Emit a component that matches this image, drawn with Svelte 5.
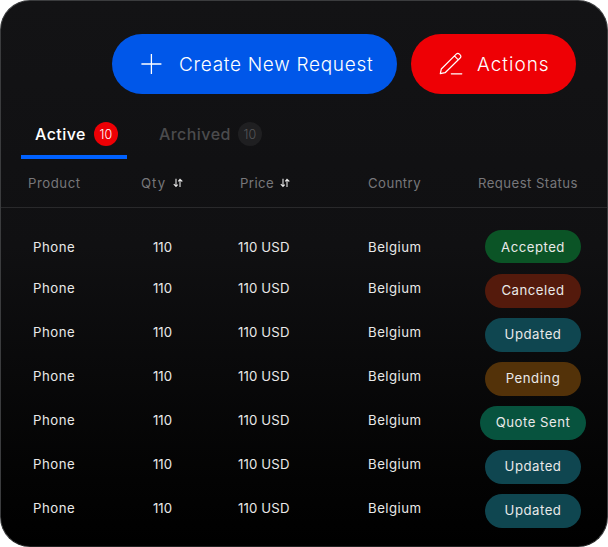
<script>
  const columns = [
    { label: 'Product', cls: 'h-product' },
    { label: 'Qty', cls: 'h-qty', sortable: true },
    { label: 'Price', cls: 'h-price', sortable: true },
    { label: 'Country', cls: 'h-country' },
    { label: 'Request Status', cls: 'h-status' }
  ];
  const statuses = ['Accepted', 'Canceled', 'Updated', 'Pending', 'Quote Sent', 'Updated', 'Updated'];
  const rows = statuses.map((status) => ({
    product: 'Phone', qty: '110', price: '110 USD', country: 'Belgium', status,
    tone: status.toLowerCase().replace(' ', '-')
  }));
</script>

<main class="card">
  <div class="toolbar">
    <button class="btn create">
      <svg width="22" height="22" viewBox="0 0 22 22" fill="none" stroke="currentColor" stroke-width="1.3">
        <path d="M11.4 1v20M1.4 11h20" />
      </svg>
      <span>Create New Request</span>
    </button>
    <button class="btn actions">
      <svg width="24" height="24" viewBox="0 0 24 24" fill="none" stroke="currentColor" stroke-width="1.2" stroke-linejoin="round" stroke-linecap="round">
        <path d="M1.3 21.6l1-4.6L17.2 2.1a2.3 2.3 0 0 1 3.2 0l.7.7a2.3 2.3 0 0 1 0 3.2L6.1 20.7zM15.4 3.9l3.9 3.9M12.3 21.8h10.5" />
      </svg>
      <span>Actions</span>
    </button>
  </div>

  <nav class="tabs">
    <button class="tab active"><span class="name">Active</span><span class="count">10</span></button>
    <button class="tab archived"><span class="name">Archived</span><span class="count">10</span></button>
  </nav>

  <div class="head">
    {#each columns as col}
      <div class="th {col.cls}">
        <span>{col.label}</span>
        {#if col.sortable}
          <svg width="10" height="10" viewBox="0 0 10 10" fill="none" stroke="#e6e6e6" stroke-width="1.1">
            <path d="M3 .7v7.5M.8 6.2L3 8.5l1.7-1.8M7 9V1.6M5.3 3.3L7 1.3l2.3 2.2" />
          </svg>
        {/if}
      </div>
    {/each}
  </div>

  <div class="body">
    {#each rows as row}
      <div class="row">
        <span class="cell product">{row.product}</span>
        <span class="cell qty">{row.qty}</span>
        <span class="cell price">{row.price}</span>
        <span class="cell country">{row.country}</span>
        <div class="status"><span class="pill {row.tone}">{row.status}</span></div>
      </div>
    {/each}
  </div>
</main>

<style>
  :global(body) { margin: 0; background: #fff; }
  * { box-sizing: border-box; }
  .card {
    width: 608px;
    height: 547px;
    overflow: hidden;
    border: 1px solid #3b3c3e;
    border-bottom-color: #232323;
    border-radius: 30px;
    background: linear-gradient(180deg, #131315 0%, #101012 45%, #030303 88%, #000 100%);
    font-family: Inter, "Liberation Sans", sans-serif;
    color: #e9e9e9;
  }
  button { border: 0; padding: 0; margin: 0; background: none; color: inherit; font: inherit; }
  .toolbar { display: flex; gap: 14px; padding: 33px 0 0 111px; }
  .btn { display: flex; align-items: center; height: 60px; border-radius: 30px; font-size: 19px; font-weight: 300; white-space: nowrap; color: #fff; }
  .create { width: 285px; padding-left: 28px; background: #0057e9; letter-spacing: 0.7px; }
  .create span { margin-left: 17px; }
  .actions { width: 165px; padding-left: 28px; background: #ee0005; letter-spacing: 1px; }
  .actions span { margin-left: 14px; }
  .tabs { display: flex; margin-top: 24px; padding-left: 20px; height: 41px; }
  .tab { display: flex; height: 41px; padding-bottom: 9px; align-items: center; font-size: 16px; font-weight: 500; }
  .active { width: 106.4px; padding-left: 14px; color: #fff; border-bottom: 4px solid #0061ff; padding-bottom: 5px; }
  .archived { margin-left: 31.6px; color: #4b4b4d; }
  .name { width: 59px; text-align: left; white-space: nowrap; letter-spacing: 0.45px; }
  .archived .name { width: 79px; }
  .count { width: 24px; height: 24px; border-radius: 50%; background: #ee0005; font-size: 12.5px; font-weight: 300; line-height: 25px; text-align: center; letter-spacing: 0.2px; }
  .archived .count { background: #1f1f21; color: #565658; }
  .head { display: grid; grid-template-columns: 113px 99px 128px 110px 1fr; height: 49px; padding-left: 27px; border-bottom: 1px solid #29292b; color: #77777a; font-size: 13.2px; letter-spacing: 0.43px; }
  .th { display: flex; height: 48px; align-items: center; white-space: nowrap; }
  .th svg { margin-left: 7px; }
  .h-product span { letter-spacing: 0.55px; }
  .h-price svg { margin-left: 6px; }
  .h-qty span { letter-spacing: 1px; }
  .body { padding-top: 16px; }
  .row { display: grid; grid-template-columns: 120px 85px 130px 100px 130px; height: 44px; padding: 5px 0 5px 32px; font-size: 13.2px; }
  .cell { line-height: 30px; white-space: nowrap; letter-spacing: 0.5px; }
  .cell.qty { letter-spacing: 0; }
  .cell.price { letter-spacing: 0.15px; }
  .row:first-child { height: 45px; padding-bottom: 6px; }
  .row:nth-child(n + 2) .cell { line-height: 28px; }
  .row:first-child .cell { line-height: 36px; }
  .status { display: flex; justify-content: center; align-items: flex-start; }
  .pill { flex: none; width: 96px; height: 33.5px; border-radius: 17px; line-height: 33px; text-align: center; letter-spacing: 0.5px; }
  .accepted { margin-top: 0.5px; line-height: 34px; background: #0b5426; }
  .canceled { background: #541a0c; }
  .updated { background: #0f4650; }
  .pending { background: #533209; }
  .quote-sent { width: 106px; background: #07533e; }
</style>
